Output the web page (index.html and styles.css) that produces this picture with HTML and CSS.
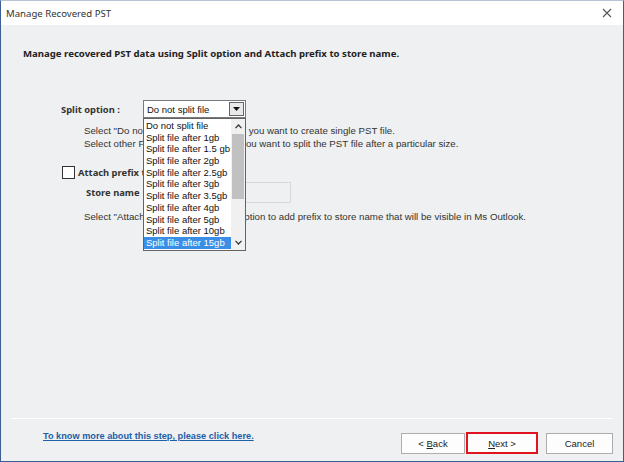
FILE: index.html
```html
<!DOCTYPE html>
<html lang="en">

<head>
    <meta charset="UTF-8">
    <title>Manage Recovered PST</title>
    <link rel="stylesheet" href="styles.css">
</head>

<body>
    <div class="window">
        <div class="titlebar">
            <span class="title">Manage Recovered PST</span>
            <svg class="close" width="10" height="10" viewBox="0 0 10 10">
                <path d="M1 1 L9 9 M9 1 L1 9" stroke="#555" stroke-width="1.1" fill="none"/>
            </svg>
        </div>

        <div class="content">
            <h1 class="intro">Manage recovered PST data using Split option and Attach prefix to store name.</h1>

            <div class="split-row">
                <label class="split-label">Split option :</label>
                <div class="combo">
                    <div class="combo-box">
                        <span>Do not split file</span>
                        <span class="combo-arrow">
                            <svg width="7" height="4" viewBox="0 0 7 4"><path d="M0 0 H7 L3.5 4 Z" fill="#111"/></svg>
                        </span>
                    </div>
                    <div class="combo-list">
                        <ul class="options">
                            <li>Do not split file</li>
                            <li>Split file after 1gb</li>
                            <li>Split file after 1.5 gb</li>
                            <li>Split file after 2gb</li>
                            <li>Split file after 2.5gb</li>
                            <li>Split file after 3gb</li>
                            <li>Split file after 3.5gb</li>
                            <li>Split file after 4gb</li>
                            <li>Split file after 5gb</li>
                            <li>Split file after 10gb</li>
                            <li class="selected">Split file after 15gb</li>
                        </ul>
                        <div class="scrollbar">
                            <svg class="scroll-btn" width="7" height="5" viewBox="0 0 7 5"><path d="M0.5 4.2 L3.5 1 L6.5 4.2" stroke="#333" stroke-width="1.2" fill="none"/></svg>
                            <div class="track"><div class="thumb"></div></div>
                            <svg class="scroll-btn" width="7" height="5" viewBox="0 0 7 5"><path d="M0.5 0.8 L3.5 4 L6.5 0.8" stroke="#333" stroke-width="1.2" fill="none"/></svg>
                        </div>
                    </div>
                </div>
            </div>

            <p class="hint split-hint">Select "Do not split file" options only if you want to create single PST file.<br>Select other PST split size options if you want to split the PST file after a particular size.</p>

            <div class="check-row">
                <span class="checkbox"></span>
                <label class="check-label">Attach prefix to store name</label>
            </div>

            <div class="store-row">
                <label class="store-label">Store name</label>
                <input class="store-input" type="text">
            </div>

            <p class="hint store-hint">Select "Attach prefix to store name" option to add prefix to store name that will be visible in Ms Outlook.</p>
        </div>

        <div class="footer">
            <a class="help-link" href="#">To know more about this step, please click here.</a>
            <div class="buttons">
                <button class="btn back">&lt; <u>B</u>ack</button>
                <button class="btn next"><u>N</u>ext &gt;</button>
                <button class="btn cancel">Cancel</button>
            </div>
        </div>
    </div>
</body>

</html>
```

FILE: styles.css
```css
* {
    margin: 0;
    padding: 0;
    box-sizing: border-box;
}

body {
    width: 624px;
    height: 462px;
    background: #eef0f2;
    font-family: 'Liberation Sans', Arial, sans-serif;
    font-size: 9px;
    color: #333;
}

.window {
    width: 624px;
    height: 462px;
    display: flex;
    flex-direction: column;
    background: #eef0f2;
    border: 1px solid #3b5f95;
    border-top-color: #b8c4d6;
}

.titlebar {
    height: 24px;
    background: #fff;
    display: flex;
    align-items: center;
    justify-content: space-between;
    padding: 0 11px 0 5px;
}

.title {
    font-family: 'Noto Sans', 'Open Sans', sans-serif;
    font-size: 9.6px;
    color: #333;
}

.content {
    flex: 1;
    padding: 22px 0 0 22px;
}

.intro {
    font-family: 'Noto Sans', 'Open Sans', sans-serif;
    font-size: 9.6px;
    font-weight: bold;
    line-height: 14px;
    color: #222;
}

.split-row {
    display: flex;
    align-items: center;
    margin-top: 39px;
    padding-left: 38px;
}

.split-label,
.check-label,
.store-label {
    font-family: 'Noto Sans', 'Open Sans', sans-serif;
    font-weight: bold;
    font-size: 9.4px;
    color: #333;
}

.split-label {
    width: 82px;
}

.combo {
    position: relative;
    width: 103px;
}

.combo-box {
    height: 18px;
    background: #fff;
    border: 1px solid #7a7a7a;
    display: flex;
    align-items: center;
    justify-content: space-between;
    padding: 0 1px 0 3px;
    font-size: 9.5px;
    color: #111;
}

.combo-arrow {
    width: 15px;
    height: 14px;
    border: 1px solid #666;
    background: #e9e9e9;
    display: flex;
    align-items: center;
    justify-content: center;
}

.combo-list {
    position: absolute;
    top: 18px;
    left: 0;
    width: 103px;
    height: 133px;
    background: #fff;
    border: 1px solid #646464;
    display: flex;
    z-index: 2;
}

.options {
    list-style: none;
    flex: 1;
    padding-top: 1px;
}

.options li {
    height: 11.7px;
    line-height: 11.7px;
    padding-left: 2px;
    font-size: 9.5px;
    color: #111;
    white-space: nowrap;
}

.options li.selected {
    background: #3a8ee6;
    color: #fff;
}

.scrollbar {
    width: 14px;
    background: #f0f0f0;
    display: flex;
    flex-direction: column;
    align-items: center;
}

.scroll-btn {
    margin: 5px 0;
}

.track {
    flex: 1;
    width: 100%;
    padding: 0 1px;
}

.thumb {
    height: 65px;
    background: #c1c1c1;
}

.hint {
    font-size: 9.7px;
    line-height: 13px;
    color: #333;
    padding-left: 61px;
}

.split-hint {
    margin-top: 6px;
}

.check-row {
    display: flex;
    align-items: center;
    margin-top: 16px;
    padding-left: 39px;
}

.checkbox {
    width: 13px;
    height: 13px;
    background: #fff;
    border: 1px solid #333;
    margin-right: 3px;
}

.store-row {
    display: flex;
    align-items: center;
    margin-top: 3px;
    padding-left: 63px;
}

.store-label {
    width: 64px;
}

.store-input {
    width: 141px;
    height: 21px;
    border: 1px solid #d6d8da;
    background: #eef0f2;
}

.store-hint {
    margin-top: 7px;
}

.footer {
    height: 43px;
    margin: 0 10px;
    border-top: 1px solid #fff;
    display: flex;
    justify-content: space-between;
    align-items: flex-start;
    padding: 13px 0 0 32px;
}

.help-link {
    margin-top: -1px;
    font-size: 9.2px;
    font-weight: bold;
    color: #1f5fa8;
    text-decoration: underline;
}

.buttons {
    display: flex;
    align-items: center;
}

.btn {
    height: 21px;
    background: #fdfdfd;
    border: 1px solid #adadad;
    font-family: 'Liberation Sans', Arial, sans-serif;
    font-size: 9.5px;
    color: #222;
}

.back {
    width: 64px;
}

.next {
    width: 72px;
    height: 22px;
    border: 2px solid #e0141e;
    margin-left: 1px;
}

.cancel {
    width: 67px;
    margin-left: 8px;
}
```
